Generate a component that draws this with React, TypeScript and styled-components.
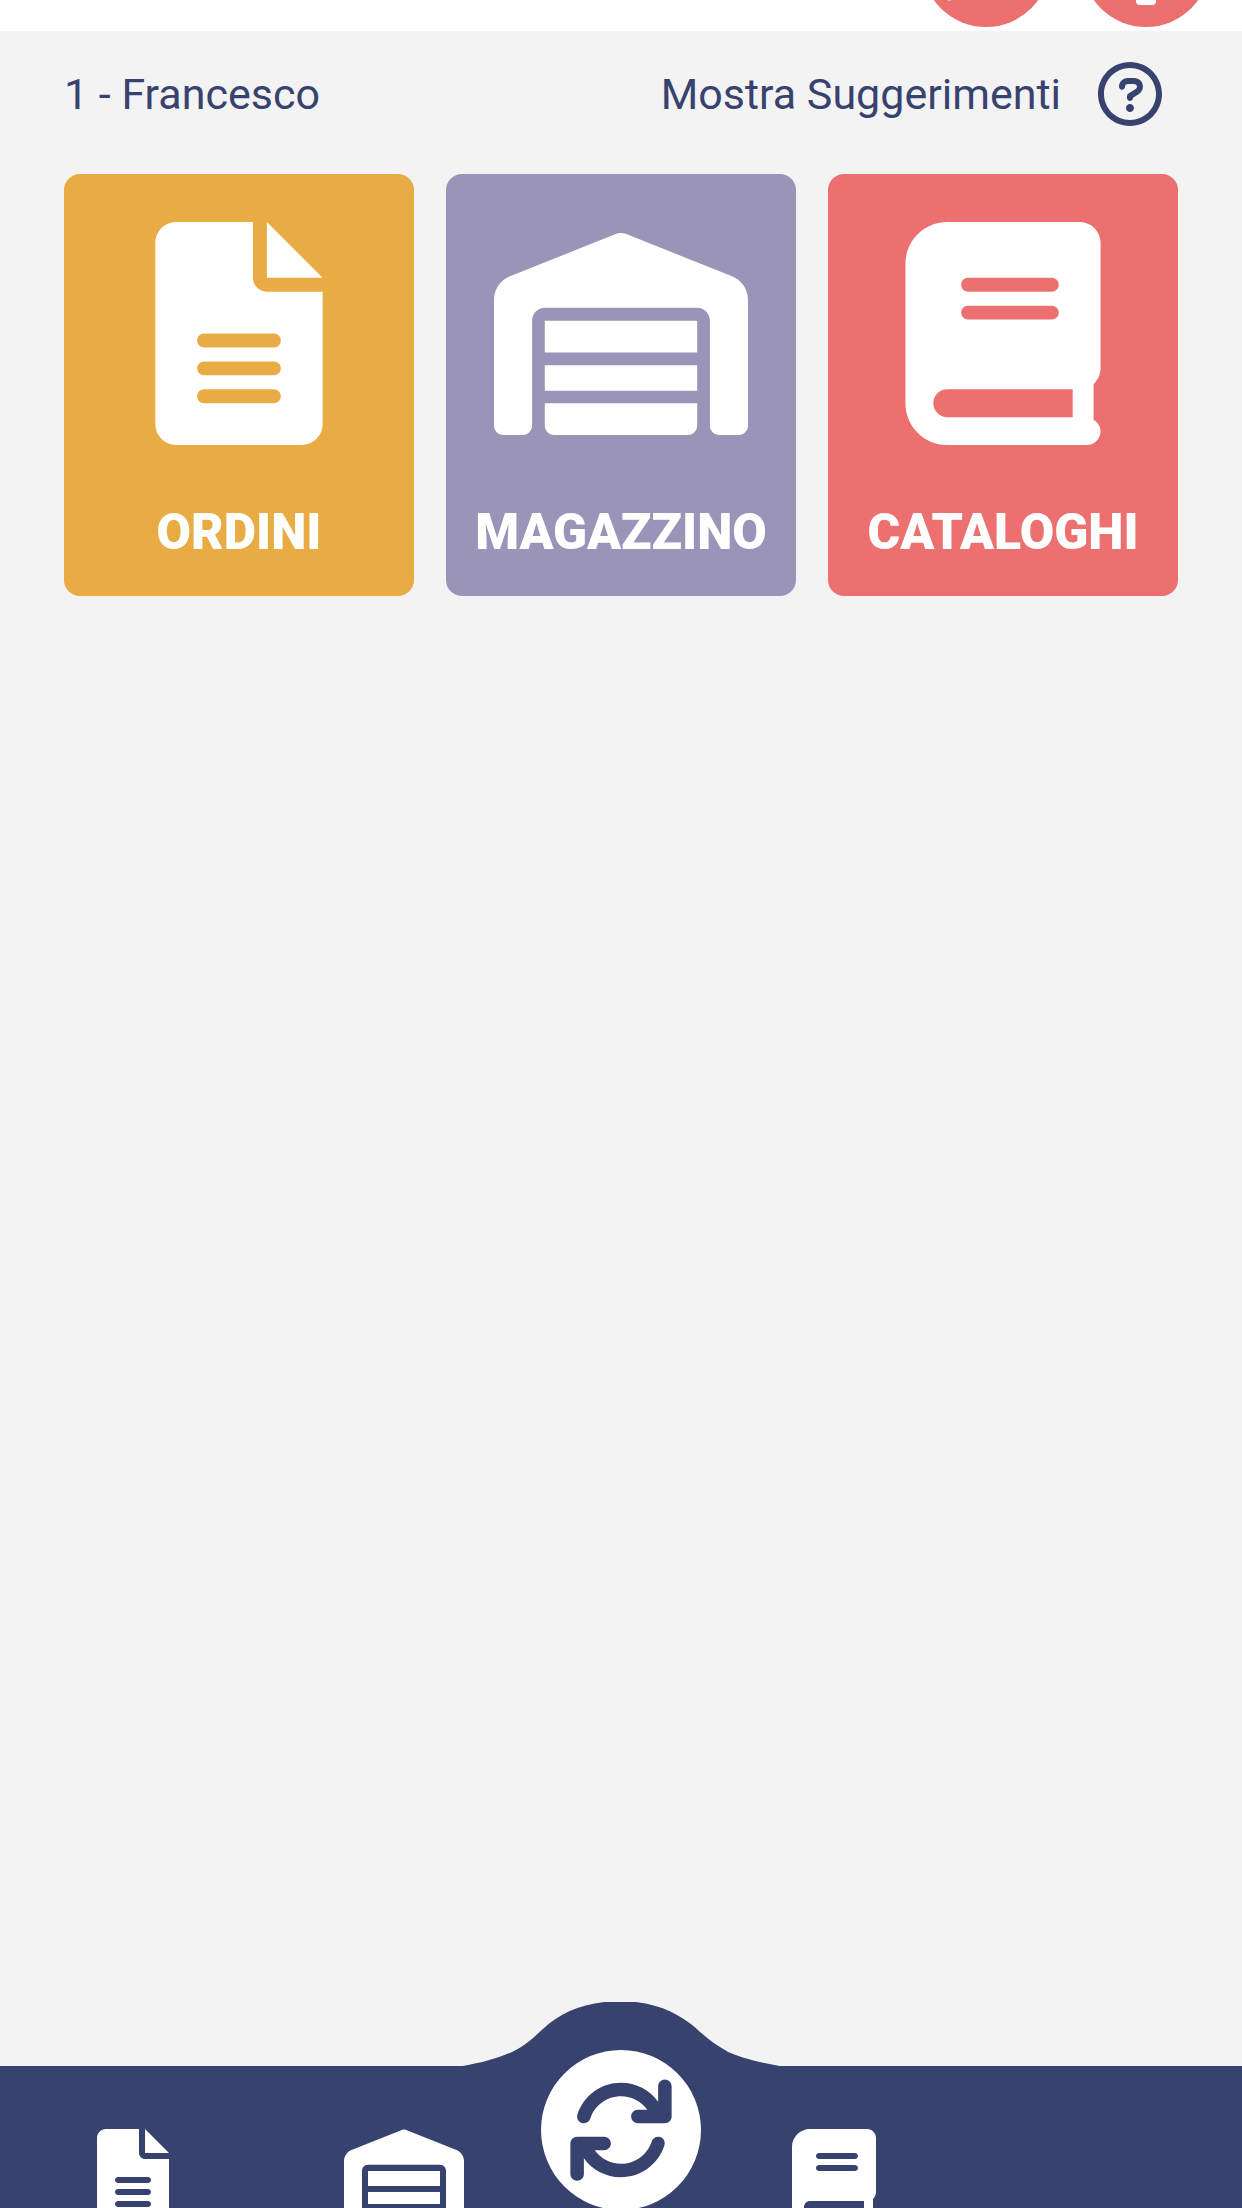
import React from "react";
import styled, { createGlobalStyle } from "styled-components";

const color = {
  navy: "#38426e",
  coral: "#ec706f",
  amber: "#e9ab43",
  lilac: "#9a94b9",
  page: "#f3f3f3",
};

const GlobalStyle = createGlobalStyle`
  *, *::before, *::after { box-sizing: border-box; }
  body {
    margin: 0;
    background: ${color.page};
    color: ${color.navy};
    font-family: Roboto, "Noto Sans", sans-serif;
  }
  button { font: inherit; color: inherit; border: 0; padding: 0; background: none; cursor: pointer; }
`;

const Page = styled.div`
  display: flex;
  flex-direction: column;
  height: 100vh;
  overflow: hidden;
`;

const TopBar = styled.header`
  flex: none;
  display: flex;
  justify-content: flex-end;
  align-items: flex-end;
  gap: 32px;
  height: 31px;
  padding: 0 32px 4px;
  overflow: hidden;
  background: #fff;
`;

const RoundButton = styled.button`
  flex: none;
  width: 128px;
  height: 128px;
  border-radius: 50%;
  background: ${color.coral};

  svg { display: block; width: 128px; height: 128px; }
`;

const Main = styled.main`
  flex: 1;
  padding: 31px 64px;
`;

const InfoRow = styled.div`
  display: flex;
  justify-content: space-between;
  align-items: center;
  margin-bottom: 48px;
  padding-right: 16px;
`;

const InfoText = styled.span`
  font-size: 43px;
  font-weight: 400;
  line-height: 64px;
  white-space: nowrap;
`;

const HintButton = styled.button`
  display: flex;
  align-items: center;
  gap: 37px;

  svg { display: block; width: 64px; height: 64px; }
`;

const Cards = styled.div`
  display: grid;
  grid-template-columns: repeat(3, 1fr);
  gap: 32px;
`;

const Card = styled.button<{ $tone: string }>`
  display: flex;
  flex-direction: column;
  align-items: center;
  gap: 52px;
  padding: 48px 0 28px;
  border-radius: 16px;
  background: ${(p) => p.$tone};
  color: #fff;

  svg { display: block; width: 254px; height: 223px; }
`;

const CardLabel = styled.span`
  font-size: 50px;
  font-weight: 900;
  line-height: 71px;
  white-space: nowrap;
`;

const BottomNav = styled.nav`
  position: relative;
  flex: none;
  display: grid;
  grid-template-columns: 1fr 160px 1fr;
  align-items: start;
  height: 142px;
  background: ${color.navy};
  color: #fff;
`;

const Hump = styled.svg`
  position: absolute;
  left: 50%;
  bottom: 100%;
  width: 317px;
  height: 64px;
  transform: translateX(-50%);
  fill: ${color.navy};
`;

const NavGroup = styled.div<{ $side: "left" | "right" }>`
  display: flex;
  justify-content: space-between;
  padding: ${(p) => (p.$side === "left" ? "63px 77px 0 97px" : "63px 97px 0 91px")};
`;

const NavButton = styled.button`
  svg { display: block; height: 96px; width: auto; }
`;

const SyncButton = styled.button`
  position: relative;
  display: grid;
  place-items: center;
  width: 160px;
  height: 160px;
  margin-top: -16px;
  border-radius: 50%;
  background: #fff;
  color: ${color.navy};

  svg { display: block; width: 108px; height: 108px; }
`;

const FileIcon = () => (
  <svg viewBox="0 0 384 512" fill="currentColor" aria-hidden="true">
    <path d="M256 0v128h128L256 0zM224 128L224 0H48C21.49 0 0 21.49 0 48v416C0 490.5 21.49 512 48 512h288c26.51 0 48-21.49 48-48V160h-127.1C238.3 160 224 145.7 224 128zM272 416h-160C103.2 416 96 408.8 96 400C96 391.2 103.2 384 112 384h160c8.836 0 16 7.162 16 16C288 408.8 280.8 416 272 416zM272 352h-160C103.2 352 96 344.8 96 336C96 327.2 103.2 320 112 320h160c8.836 0 16 7.162 16 16C288 344.8 280.8 352 272 352zM288 272C288 280.8 280.8 288 272 288h-160C103.2 288 96 280.8 96 272C96 263.2 103.2 256 112 256h160C280.8 256 288 263.2 288 272z" />
  </svg>
);

const WarehouseIcon = () => (
  <svg viewBox="0 0 640 512" fill="currentColor" aria-hidden="true">
    <path d="M0 488V171.3C0 145.2 15.93 121.6 40.23 111.9L308.1 4.753C315.7 1.702 324.3 1.702 331.9 4.753L599.8 111.9C624.1 121.6 640 145.2 640 171.3V488C640 501.3 629.3 512 616 512H568C554.7 512 544 501.3 544 488V223.1C544 206.3 529.7 191.1 512 191.1H128C110.3 191.1 96 206.3 96 223.1V488C96 501.3 85.25 512 72 512H24C10.75 512 0 501.3 0 488zM152 512C138.7 512 128 501.3 128 488V432H512V488C512 501.3 501.3 512 488 512H152zM128 336H512V400H128V336zM128 224H512V304H128V224z" />
  </svg>
);

const BookIcon = () => (
  <svg viewBox="0 0 448 512" fill="currentColor" aria-hidden="true">
    <path d="M448 336v-288C448 21.49 426.5 0 400 0H96C42.98 0 0 42.98 0 96v320c0 53.02 42.98 96 96 96h320c17.67 0 32-14.33 32-31.1c0-11.72-6.607-21.52-16-27.1v-81.36C441.8 362.8 448 350.2 448 336zM143.1 128h192C344.8 128 352 135.2 352 144C352 152.8 344.8 160 336 160H143.1C135.2 160 128 152.8 128 144C128 135.2 135.2 128 143.1 128zM143.1 192h192C344.8 192 352 199.2 352 208C352 216.8 344.8 224 336 224H143.1C135.2 224 128 216.8 128 208C128 199.2 135.2 192 143.1 192zM384 448H96c-17.67 0-32-14.33-32-32c0-17.67 14.33-32 32-32h288V448z" />
  </svg>
);

const QuestionIcon = () => (
  <svg viewBox="0 0 512 512" fill="currentColor" aria-hidden="true">
    <path d="M256 0C114.6 0 0 114.6 0 256s114.6 256 256 256s256-114.6 256-256S397.4 0 256 0zM256 464c-114.7 0-208-93.31-208-208S141.3 48 256 48s208 93.31 208 208S370.7 464 256 464zM256 336c-18 0-32 14-32 32s13.1 32 32 32c17.1 0 32-14 32-32S273.1 336 256 336zM289.1 128h-51.1C199 128 168 159 168 198c0 13 11 24 24 24s24-11 24-24C216 186 225.1 176 237.1 176h51.1C301.1 176 312 186 312 198c0 8-4 14.1-11 18.1L244 251C236 256 232 264 232 272V288c0 13 11 24 24 24S280 301 280 288V286l45.1-28c21-13 34-36 34-60C360 159 329 128 289.1 128z" />
  </svg>
);

const SyncIcon = () => (
  <svg viewBox="0 0 512 512" fill="currentColor" aria-hidden="true">
    <path d="M464 16c-17.67 0-32 14.31-32 32v74.09C392.1 66.52 327.4 32 256 32C161.5 32 78.59 92.34 49.58 182.2c-5.438 16.81 3.797 34.88 20.61 40.28c16.89 5.5 34.88-3.812 40.3-20.59C130.9 138.5 189.4 96 256 96c50.5 0 96.26 24.55 124.4 64H336c-17.67 0-32 14.31-32 32s14.33 32 32 32h128c17.67 0 32-14.31 32-32V48C496 30.31 481.7 16 464 16zM441.8 289.6c-16.92-5.438-34.88 3.812-40.3 20.59C381.1 373.5 322.6 416 256 416c-50.5 0-96.25-24.55-124.4-64H176c17.67 0 32-14.31 32-32s-14.33-32-32-32h-128c-17.67 0-32 14.31-32 32v144c0 17.69 14.33 32 32 32s32-14.31 32-32v-74.09C119.9 445.5 184.6 480 255.1 480c94.45 0 177.4-60.34 206.4-150.2C467.2 313 458.6 294.1 441.8 289.6z" />
  </svg>
);

const SearchIcon = () => (
  <svg viewBox="0 0 128 128" fill="none" stroke="#fff" strokeWidth="9" strokeLinecap="round" aria-hidden="true">
    <circle cx="70" cy="56" r="26" />
    <path d="M51 75L27 97" />
  </svg>
);

const MicIcon = () => (
  <svg viewBox="0 0 128 128" fill="#fff" aria-hidden="true">
    <rect x="44" y="26" width="40" height="50" rx="20" />
    <rect x="54" y="72" width="20" height="34" rx="4" />
  </svg>
);

const cards = [
  { label: "ORDINI", tone: color.amber, Icon: FileIcon },
  { label: "MAGAZZINO", tone: color.lilac, Icon: WarehouseIcon },
  { label: "CATALOGHI", tone: color.coral, Icon: BookIcon },
];

export default function App() {
  return (
    <>
      <GlobalStyle />
      <Page>
        <TopBar>
          <RoundButton aria-label="Cerca"><SearchIcon /></RoundButton>
          <RoundButton aria-label="Account"><MicIcon /></RoundButton>
        </TopBar>
        <Main>
          <InfoRow>
            <InfoText>1 - Francesco</InfoText>
            <HintButton>
              <InfoText>Mostra Suggerimenti</InfoText>
              <QuestionIcon />
            </HintButton>
          </InfoRow>
          <Cards>
            {cards.map(({ label, tone, Icon }) => (
              <Card key={label} $tone={tone}>
                <Icon />
                <CardLabel>{label}</CardLabel>
              </Card>
            ))}
          </Cards>
        </Main>
        <BottomNav>
          <Hump viewBox="0 0 950 192" preserveAspectRatio="none" aria-hidden="true">
            <path d="M0 192C60 182 110 168 150 149C190 130 215 105 240 82C290 35 345 10 425 0H520C600 10 655 40 700 79C730 107 760 130 795 149C830 165 890 182 950 192Z" />
          </Hump>
          <NavGroup $side="left">
            <NavButton aria-label="Ordini"><FileIcon /></NavButton>
            <NavButton aria-label="Magazzino"><WarehouseIcon /></NavButton>
          </NavGroup>
          <SyncButton aria-label="Sincronizza"><SyncIcon /></SyncButton>
          <NavGroup $side="right">
            <NavButton aria-label="Cataloghi"><BookIcon /></NavButton>
          </NavGroup>
        </BottomNav>
      </Page>
    </>
  );
}
